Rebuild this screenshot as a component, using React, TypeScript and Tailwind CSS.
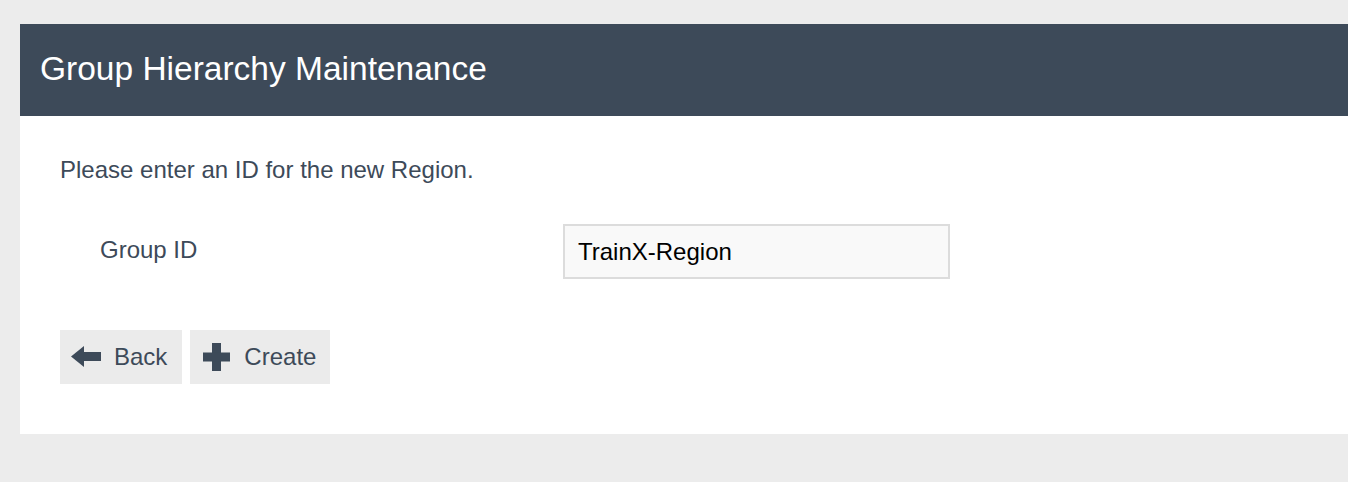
import { useState } from 'react'

function ArrowLeftIcon() {
  return (
    <svg width="30" height="21" viewBox="0 0 30 21" className="text-[#3d4a59]">
      <path d="M0 10.5 L13 0 L13 21 Z" fill="currentColor" />
      <rect x="12.5" y="6" width="17.5" height="9" fill="currentColor" />
    </svg>
  )
}

function PlusIcon() {
  return (
    <svg width="27" height="28" viewBox="0 0 27 28" className="text-[#3d4a59]">
      <rect x="9" y="0" width="9" height="28" fill="currentColor" />
      <rect x="0" y="9.5" width="27" height="9" fill="currentColor" />
    </svg>
  )
}

export default function App() {
  const [groupId, setGroupId] = useState('TrainX-Region')

  return (
    <div className="min-h-screen bg-[#ececec] pt-[24px] pl-[20px] font-['Liberation_Sans',Arial,sans-serif]">
      <div className="bg-white">
        <div className="h-[92px] bg-[#3d4a59] flex items-center pl-[20px] pb-[3px]">
          <h1 className="text-[33.5px] leading-none text-white">Group Hierarchy Maintenance</h1>
        </div>

        <div className="pt-[40px] pb-[50px] pl-[40px] text-[#3d4a59]">
          <p className="text-[24px] leading-[1.2]">Please enter an ID for the new Region.</p>

          <div className="mt-[39px] flex items-start">
            <label htmlFor="groupId" className="w-[503px] pl-[40px] pt-[12px] text-[24px] leading-[1.2]">
              Group ID
            </label>
            <input
              id="groupId"
              type="text"
              value={groupId}
              onChange={(e) => setGroupId(e.target.value)}
              className="w-[387px] h-[55px] bg-[#f9f9f9] border-2 border-[#dcdcdc] pl-[13px] pt-[2px] text-[24px] text-black outline-none font-['Liberation_Sans',Arial,sans-serif]"
            />
          </div>

          <div className="mt-[51px] flex gap-[8px]">
            <button className="h-[54px] bg-[#ebebeb] flex items-center pl-[11px] pr-[15px] gap-[13px] text-[24px]">
              <span className="w-[30px] flex justify-center">
                <ArrowLeftIcon />
              </span>
              Back
            </button>
            <button className="h-[54px] bg-[#ebebeb] flex items-center pl-[11px] pr-[14px] gap-[13px] text-[24px]">
              <span className="w-[30px] flex justify-center">
                <PlusIcon />
              </span>
              Create
            </button>
          </div>
        </div>
      </div>
    </div>
  )
}
